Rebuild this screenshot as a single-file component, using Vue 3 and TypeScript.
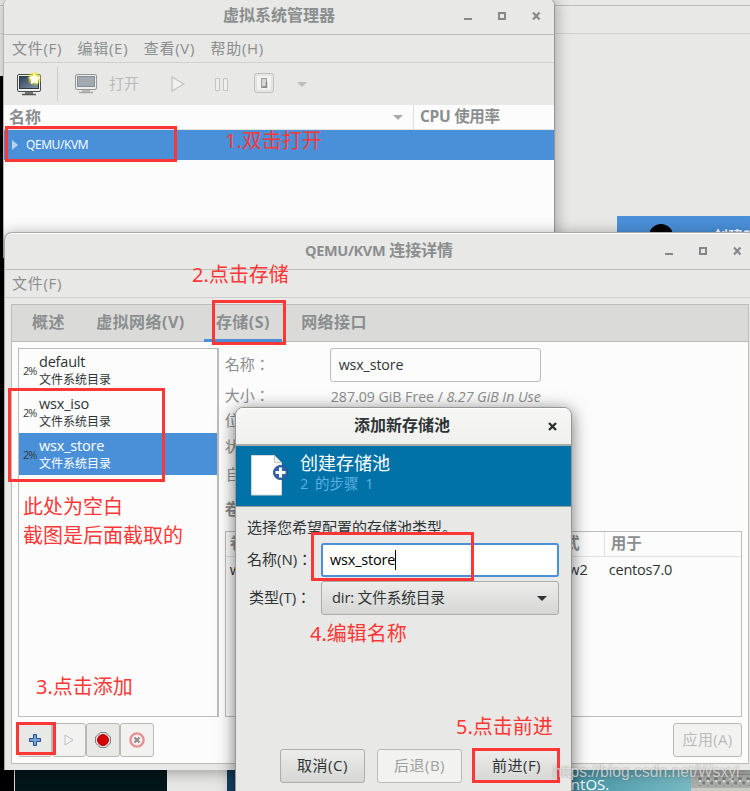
<script setup lang="ts">
interface Pool { name: string; kind: string; selected?: boolean }
interface Box { x: number; y: number; w: number; h: number }
interface Note { x: number; y: number; text: string }

const pools: Pool[] = [
  { name: 'default', kind: '文件系统目录' },
  { name: 'wsx_iso', kind: '文件系统目录' },
  { name: 'wsx_store', kind: '文件系统目录', selected: true },
]
const mainMenu = ['文件(F)', '编辑(E)', '查看(V)', '帮助(H)']
const tabs = ['概述', '虚拟网络(V)', '存储(S)', '网络接口']
const boxes: Box[] = [
  { x: 5, y: 126, w: 172, h: 36 },
  { x: 212, y: 300, w: 74, h: 45 },
  { x: 8, y: 388, w: 157, h: 94 },
  { x: 311, y: 532, w: 163, h: 49 },
  { x: 16, y: 722, w: 40, h: 33 },
  { x: 472, y: 748, w: 88, h: 35 },
]
const notes: Note[] = [
  { x: 225, y: 126, text: '1.双击打开' },
  { x: 192, y: 260, text: '2.点击存储' },
  { x: 23, y: 492, text: '此处为空白' },
  { x: 23, y: 521, text: '截图是后面截取的' },
  { x: 36, y: 672, text: '3.点击添加' },
  { x: 310, y: 619, text: '4.编辑名称' },
  { x: 456, y: 712, text: '5.点击前进' },
]
</script>

<template>
  <div class="desktop">
    <div class="back-window">
      <div class="back-line strong"></div>
      <div class="back-line"></div>
    </div>
    <div class="black-edge"></div>
    <div class="back-row">
      <i class="dot"></i><span>创建时间</span>
    </div>

    <section class="win main-win">
      <header class="titlebar">
        <h1>虚拟系统管理器</h1>
        <svg class="controls" width="78" height="10" viewBox="0 0 78 10">
          <path d="M0 8h8" stroke-width="2" />
          <rect x="35" y="2" width="6" height="6" stroke-width="2" />
          <path d="M69 1.500l6.500 7M75.500 1.500l-6.500 7" stroke-width="2.200" />
        </svg>
      </header>
      <nav class="menubar"><span v-for="m in mainMenu" :key="m">{{ m }}</span></nav>
      <div class="toolbar">
        <svg class="new-vm" width="26" height="26" viewBox="0 0 26 26">
          <defs>
            <linearGradient id="scr" x1="0" y1="0" x2="1" y2="1"><stop offset="0" stop-color="#2b3f57" /><stop offset="1" stop-color="#8496aa" /></linearGradient>
            <radialGradient id="glow"><stop offset=".45" stop-color="#f4ee24" /><stop offset="1" stop-color="#f4ee24" stop-opacity="0" /></radialGradient>
          </defs>
          <rect x="1.500" y="3.500" width="23" height="17" rx="1.500" fill="#f2f2ef" stroke="#4a4d4d" />
          <rect x="3.500" y="5.500" width="19" height="12" fill="url(#scr)" stroke="#323a42" />
          <path d="M9 21h8v2H9z" fill="#777" /><path d="M6 23.500h14" stroke="#555" stroke-width="1.600" />
          <circle cx="18.500" cy="7.500" r="7.500" fill="url(#glow)" />
          <path d="M18.500 1.800l1.800 3.700 4.100.6-3 2.900.7 4.100-3.600-1.900-3.700 1.900.7-4.100-3-2.900 4.200-.6z" fill="#fff" />
        </svg>
        <i class="sep"></i>
        <svg class="open-vm" width="22" height="20" viewBox="0 0 22 20">
          <rect x=".5" y=".5" width="21" height="15" rx="1.500" fill="#ececea" stroke="#959796" />
          <rect x="2.500" y="2.500" width="17" height="10" fill="#a1a9b1" stroke="#888e94" />
          <path d="M7 16h8v2H7z" fill="#b8b9b8" /><path d="M4 18.500h14" stroke="#a7a9a7" stroke-width="1.500" />
        </svg>
        <span class="open-label">打开</span>
        <svg class="play" width="14" height="16" viewBox="0 0 14 16"><path d="M1 1l12 7-12 7z" fill="#f1f1f0" stroke="#c0c1c0" stroke-width="1.200" /></svg>
        <svg class="pause" width="13" height="13" viewBox="0 0 13 13"><path d="M.5.5h4v12h-4zM8.500.5h4v12h-4z" fill="#eeeeed" stroke="#c2c3c2" /></svg>
        <svg class="power" width="20" height="20" viewBox="0 0 20 20"><rect x=".7" y=".7" width="18.600" height="18.600" rx="2" fill="#f3f3f2" stroke="#b4b6b5" /><rect x="2.500" y="2.500" width="15" height="15" fill="none" stroke="#e1e1e0" /><rect x="7.500" y="5.500" width="5" height="9" fill="#d5d6d5" stroke="#9c9e9d" /><path d="M8.500 14h4V9" fill="none" stroke="#858786" stroke-width="1.500" /></svg>
        <svg class="drop" width="10" height="5" viewBox="0 0 10 5"><path d="M0 0h10L5 5z" fill="#bcbebd" /></svg>
      </div>
      <div class="vm-head">
        <div class="vm-name"><b>名称</b><svg width="10" height="5" viewBox="0 0 10 5"><path d="M0 0h10L5 5z" fill="#aaacab" /></svg></div>
        <b class="vm-cpu">CPU 使用率</b>
      </div>
      <div class="vm-row"><svg width="6" height="10" viewBox="0 0 6 10"><path d="M0 0l6 5-6 5z" fill="#b8d4f0" /></svg><span>QEMU/KVM</span></div>
    </section>

    <div class="under">
      <i class="u-black"></i><i class="u-dark"></i><i class="u-grey"></i><i class="u-blue"></i>
      <span class="u-teal">CentOS.</span>
      <svg class="u-dots" width="59" height="21">
        <defs><pattern id="holes" width="8" height="8" patternUnits="userSpaceOnUse" x="6" y="7"><circle cx="3" cy="2" r="1.800" fill="#747675" /><circle cx="3" cy="4" r="1.300" fill="#e0e0df" /><circle cx="7" cy="6" r="1.800" fill="#7b7d7c" /></pattern></defs>
        <rect width="59" height="21" fill="#adafac" /><rect y="4" width="59" height="1" fill="#8d8f8c" /><rect x="7" y="7" width="52" height="9" fill="url(#holes)" /><rect y="18" width="59" height="3" fill="#c9cac6" />
      </svg>
    </div>

    <section class="win details-win">
      <header class="titlebar">
        <h1><span class="lat">QEMU/KVM</span> 连接详情</h1>
        <svg class="controls" width="78" height="10" viewBox="0 0 78 10">
          <path d="M0 8h8" stroke-width="2" />
          <rect x="35" y="2" width="6" height="6" stroke-width="2" />
          <path d="M69 1.500l6.500 7M75.500 1.500l-6.500 7" stroke-width="2.200" />
        </svg>
      </header>
      <nav class="menubar"><span>文件(F)</span></nav>
      <div class="notebook">
        <div class="tabs"><b v-for="t in tabs" :key="t" :class="{ active: t === '存储(S)' }">{{ t }}</b></div>
        <div class="page">
          <div class="left">
            <div class="pool-list">
              <div v-for="p in pools" :key="p.name" class="pool" :class="{ selected: p.selected }">
                <span class="pct">2%</span>
                <div><div class="pname">{{ p.name }}</div><div class="pkind">{{ p.kind }}</div></div>
              </div>
            </div>
            <div class="actions">
              <button><svg width="12" height="12" viewBox="0 0 12 12"><path d="M4.500.5h3v4h4v3h-4v4h-3v-4h-4v-3h4z" fill="#7aa3d6" stroke="#234f8c" /></svg></button>
              <button class="off"><svg width="10" height="12" viewBox="0 0 10 12"><path d="M1 1l8 5-8 5z" fill="#f4f4f4" stroke="#bfc0bf" /></svg></button>
              <button><svg width="16" height="16" viewBox="0 0 16 16"><path d="M5 .7h6L15.300 5v6L11 15.300H5L.7 11V5z" fill="#fff" stroke="#676967" /><circle cx="8" cy="8" r="5.500" fill="#d60505" stroke="#a70000" /></svg></button>
              <button class="off"><svg width="16" height="16" viewBox="0 0 16 16"><circle cx="8" cy="8" r="6.600" fill="#f7efef" stroke="#e79191" stroke-width="2.400" /><path d="M5.500 5.500l5 5m0-5l-5 5" stroke="#8d908f" stroke-width="2.200" /></svg></button>
            </div>
          </div>
          <div class="right">
            <div class="form">
              <label class="r1">名称：</label><div class="field">wsx_store</div>
              <label class="r2">大小：</label><div class="usage">287.09 GiB Free / <em>8.27 GiB In Use</em></div>
              <label class="r3">位置：</label><i></i>
              <label class="r4">状态：</label><i></i>
              <label class="r5">自动启动：</label><i></i>
            </div>
            <b class="vol-label">卷</b>
            <div class="volumes">
              <div class="vrow vhead"><b>卷</b><b class="fmt">格式</b><b class="used">用于</b></div>
              <div class="vrow"><span>wsx</span><span class="fmt">qcow2</span><span class="used">centos7.0</span></div>
            </div>
            <button class="apply">应用(A)</button>
          </div>
        </div>
      </div>
    </section>

    <section class="dialog">
      <header class="dlg-title"><h2>添加新存储池</h2>
        <svg width="9" height="9" viewBox="0 0 9 9"><path d="M1 1l7 7M8 1L1 8" stroke="#2b2f30" stroke-width="2.300" /></svg>
      </header>
      <div class="banner">
        <svg width="38" height="42" viewBox="0 0 38 42">
          <path d="M.5 1.500h23l7 7v32.500H.5z" fill="#fff" stroke="#d6d9d6" /><path d="M23.500 1.500v7h7z" fill="#eef0ec" stroke="#c6c9c3" />
          <circle cx="29.500" cy="18.500" r="7" fill="#3263a6" stroke="#26528f" /><path d="M29.500 13.500v10M24.500 18.500h10" stroke="#fff" stroke-width="3" />
        </svg>
        <div><div class="b-title">创建存储池</div><div class="b-step">2 的步骤 1</div></div>
      </div>
      <div class="dlg-body">
        <p>选择您希望配置的存储池类型。</p>
        <div class="dlg-form">
          <label>名称(N)：</label><div class="entry">wsx_store<i></i></div>
          <label>类型(T)：</label><div class="combo"><span>dir: 文件系统目录</span><svg width="10" height="5" viewBox="0 0 10 5"><path d="M0 0h10L5 5z" fill="#2e3436" /></svg></div>
        </div>
        <div class="dlg-buttons"><button>取消(C)</button><button class="off">后退(B)</button><button>前进(F)</button></div>
      </div>
    </section>

    <div v-for="(b, i) in boxes" :key="'b' + i" class="mark" :style="{ left: b.x + 'px', top: b.y + 'px', width: b.w + 'px', height: b.h + 'px' }"></div>
    <div v-for="n in notes" :key="n.text" class="note" :style="{ left: n.x + 'px', top: n.y + 'px' }">{{ n.text }}</div>
    <div class="watermark">https://blog.csdn.net/Wsxyi</div>
  </div>
</template>

<style>
body { margin: 0; background: #000; overflow: hidden; }
</style>
<style scoped>
* { box-sizing: border-box; }
.desktop { position: relative; width: 750px; height: 791px; overflow: hidden; background: #e8e8e6; color: #2e3436; font: 15px/20px "Open Sans", "Noto Sans CJK SC", sans-serif; white-space: nowrap; }
h1, h2, p { margin: 0; }
svg { display: block; flex: none; }
label { font-family: "Open Sans", "Noto Sans CJK TC", sans-serif; }
.back-window { padding-top: 5px; }
.back-line { height: 1px; background: #cfcfcd; margin-bottom: 27px; }
.back-line.strong { background: #bdbdbb; }
.black-edge { position: absolute; left: 0; top: 76px; width: 5px; bottom: 0; background: #000; }
.back-row { position: absolute; left: 617px; top: 216px; width: 133px; height: 40px; background: #4a90d9; color: #fff; display: flex; padding: 8px 0 0 32px; font-weight: bold; overflow: hidden; }
.dot { flex: none; width: 24px; height: 24px; border-radius: 50%; background: #000; margin-right: 40px; }
.back-row span { line-height: 20px; padding-top: 2px; }

.win { position: absolute; background: #e8e8e6; color: #8b8e8f; border-radius: 8px 8px 0 0; }
.main-win { left: 3px; top: -2px; width: 552px; height: 260px; background: #fcfcfc; border-right: 1px solid #949695; border-left: 1px solid #b2b4b2; box-shadow: 2px 0 14px rgba(0,0,0,.28); overflow: hidden; }
.details-win { left: 4px; top: 232px; width: 751px; height: 538px; border: 1px solid #a7a9a7; border-width: 1px 0 0 1px; box-shadow: 0 2px 15px rgba(0,0,0,.35), inset 0 1px #fff; }
.titlebar { height: 37px; display: flex; align-items: center; justify-content: center; position: relative; border-bottom: 1px solid #bebebc; background: #e8e8e6; }
.details-win .titlebar { background: transparent; }
.titlebar h1 { font-size: 16px; line-height: 24px; font-weight: bold; padding-bottom: 2px; }
.details-win h1 { letter-spacing: -.1px; padding-right: 2px; }
.lat { font-size: 14.500px; letter-spacing: -.35px; }
.controls { position: absolute; right: 12px; top: 13px; fill: none; stroke: #858889; }
.menubar { height: 28px; background: #e8e8e6; border-bottom: 1px solid #cfcfcd; display: flex; align-items: center; gap: 15.500px; padding: 0 8px 2px; font-size: 15px; letter-spacing: .7px; }
.details-win .menubar { padding-left: 7px; }
.toolbar { height: 42px; background: #e8e8e6; display: flex; align-items: center; padding-left: 12px; color: #b9bbbb; }
.sep { width: 1px; height: 34px; background: #cccccb; margin: 0 17px 0 15px; }
.open-label { margin-left: 12px; width: 30px; padding-bottom: 2px; }
.play { margin-left: 32px; }
.pause { margin-left: 30px; }
.power { margin-left: 26px; margin-top: -2px; }
.drop { margin-left: 23px; }
.vm-head { height: 25px; display: flex; font-size: 16px; line-height: 22px; border-bottom: 1px solid #e2e2e0; }
.vm-name { width: 410px; display: flex; justify-content: space-between; align-items: center; padding: 0 10px 0 5px; border-right: 1px solid #dededd; }
.vm-cpu { padding-left: 6px; font-size: 15.500px; letter-spacing: -.3px; }
.vm-row { height: 30px; background: #4a90d9; color: #fff; display: flex; align-items: center; padding-left: 8px; gap: 8px; font-size: 12px; letter-spacing: -.4px; }

.under { position: absolute; top: 770px; left: 0; width: 750px; height: 21px; display: flex; background: #e8e8e6; }
.u-black { width: 14px; background: #000; }
.u-dark { width: 153px; background: #021519; border-left: 1px solid #ddd; }
.u-grey { width: 60px; }
.u-blue { width: 8px; background: #16436a; }
.u-teal { width: 456px; background: linear-gradient(90deg, #16436a 70%, #4897a9 75%, #79bac3); color: #fff; padding: 4px 0 0 318px; font-size: 15px; }

.notebook { margin: 6px 0 0 6px; width: 738px; height: 460px; border: 1px solid #bcbcba; background: #fcfcfc; }
.tabs { height: 37px; background: #dadad8; border-bottom: 1px solid #bcbcba; display: flex; gap: 7.300px; padding-left: 8px; font-size: 16px; letter-spacing: .45px; }
.tabs b { padding: 0 12px; line-height: 34px; }
.tabs b.active { border-bottom: 3px solid #4a90d9; height: 37px; }
.page { display: flex; padding: 6px 6px 0; gap: 6px; }
.left { width: 201px; }
.pool-list { height: 369px; border: 1px solid #bcbcba; border-right-width: 2px; background: #fcfcfc; color: #2e3436; }
.pool { height: 42px; display: flex; padding-left: 4px; align-items: center; }
.pool.selected { background: #4a90d9; color: #fff; }
.pct { width: 16px; color: #383c3d; font-size: 11px; letter-spacing: -1.100px; padding-top: 2px; }
.pname { font-size: 14.500px; line-height: 20px; letter-spacing: -.2px; margin-top: -2px; }
.pkind { font-size: 12px; line-height: 15px; }
.actions { display: flex; padding-top: 6px; }
button { font: inherit; margin: 0; padding: 0 0 2px; display: flex; align-items: center; justify-content: center; height: 34px; border: 1px solid #b8b8b5; border-radius: 3px; color: #2e3436; background: #e8e8e6; }
.actions button { width: 34px; padding: 0; }
button.off { background: #f2f2f1; color: #9da0a0; }
.right { width: 518px; display: flex; flex-direction: column; }
.form { display: grid; grid-template-columns: 105px 211px; grid-template-rows: 34px 27px 24px 27px 29px; align-items: center; height: 148px; }
.form label { padding-bottom: 2px; }
.form .field { height: 34px; border: 1px solid #bcbcba; border-radius: 3px; color: #2e3436; padding-left: 8px; line-height: 32px; font-size: 14.200px; letter-spacing: -.1px; }
.usage { font-size: 14.200px; letter-spacing: -.03px; padding-top: 2px; padding-left: 1px; }
.form .r5 { padding-left: 1px; }
.vol-label { line-height: 22px; font-size: 16px; margin-top: 2px; height: 35px; }
.volumes { height: 186px; margin-top: -2px; border: 1px solid #bcbcba; }
.vrow { display: flex; height: 27px; line-height: 26px; font-size: 14.500px; color: #2e3436; padding-left: 4px; }
.vrow > :first-child { width: 319px; }
.vhead { height: 25px; line-height: 22px; font-size: 15.500px; color: #8b8e8f; border-bottom: 1px solid #e1e1df; }
.fmt { width: 55px; }
span.fmt { margin-left: -5px; width: 60px; }
.used { padding-left: 5px; letter-spacing: -.2px; }
.vhead .used { border-left: 1px solid #e1e1df; padding-left: 6px; letter-spacing: 0; }
.apply { width: 69px; margin-top: 6px; align-self: flex-end; background: #f2f2f1; color: #b9bbba; letter-spacing: .3px; }

.dialog { position: absolute; left: 235px; top: 407px; width: 337px; height: 400px; border: 1px solid #949694; border-radius: 8px 8px 0 0; background: #e8e8e6; box-shadow: 0 3px 17px rgba(0,0,0,.55); overflow: hidden; }
.dlg-title { height: 38px; background: linear-gradient(#f6f6f5, #f0f0ef); border-bottom: 2px solid #aaaca9; display: flex; align-items: center; position: relative; justify-content: center; box-shadow: inset 0 1px #fff; }
.dlg-title h2 { font-size: 16px; line-height: 24px; padding: 0 3px 2px 0; }
.dlg-title svg { position: absolute; right: 14px; top: 14px; }
.banner { height: 61px; background: #0072a8; border-bottom: 1px solid #9b9e9c; display: flex; padding: 8px 0 0 15px; }
.banner > div { padding-left: 11px; }
.b-title { color: #fff; font-size: 18px; line-height: 22px; margin-top: -2px; }
.b-step { color: #5bb0df; font-size: 14.500px; line-height: 20px; word-spacing: 3px; }
.dlg-body { padding: 10px 12px 0 11px; }
.dlg-form { display: grid; grid-template-columns: 74px 238px; grid-auto-rows: 34px; row-gap: 4px; margin-top: 6px; align-items: center; }
.dlg-form label { padding-bottom: 2px; }
.dlg-form label:nth-of-type(2) { padding-left: 2px; }
.entry { height: 34px; border: 2px solid #4a90d9; border-radius: 3px; background: #fff; color: #000; display: flex; align-items: center; padding-left: 7px; font-size: 14.500px; letter-spacing: -.2px; }
.entry i { width: 1px; height: 20px; background: #000; }
.combo { height: 34px; border: 1px solid #aaaca9; border-radius: 3px; display: flex; align-items: center; justify-content: space-between; padding: 0 11px 0 10px; background: linear-gradient(#ececea, #d6d6d4); }
.combo span { font-size: 14.700px; letter-spacing: -.15px; padding-bottom: 2px; }
.dlg-buttons { display: flex; gap: 12px; padding: 134px 0 0 33px; }
.dlg-buttons button { width: 85px; background: linear-gradient(#ececea, #d6d6d4); border-color: #acaeab; font-size: 15px; letter-spacing: .5px; }
.dlg-buttons button.off { background: #f2f2f1; border-color: #babbb9; }

.mark { position: absolute; border: 3px solid #fc3735; }
.note { position: absolute; color: #fc3735; font: 20px/30px "Noto Sans", "Noto Sans CJK SC", sans-serif; }
.watermark { position: absolute; left: 553px; top: 762px; font: 15.700px/20px "Liberation Sans", sans-serif; color: rgba(255,255,255,.62); text-shadow: 0 0 2px rgba(90,90,90,.65); }
</style>
